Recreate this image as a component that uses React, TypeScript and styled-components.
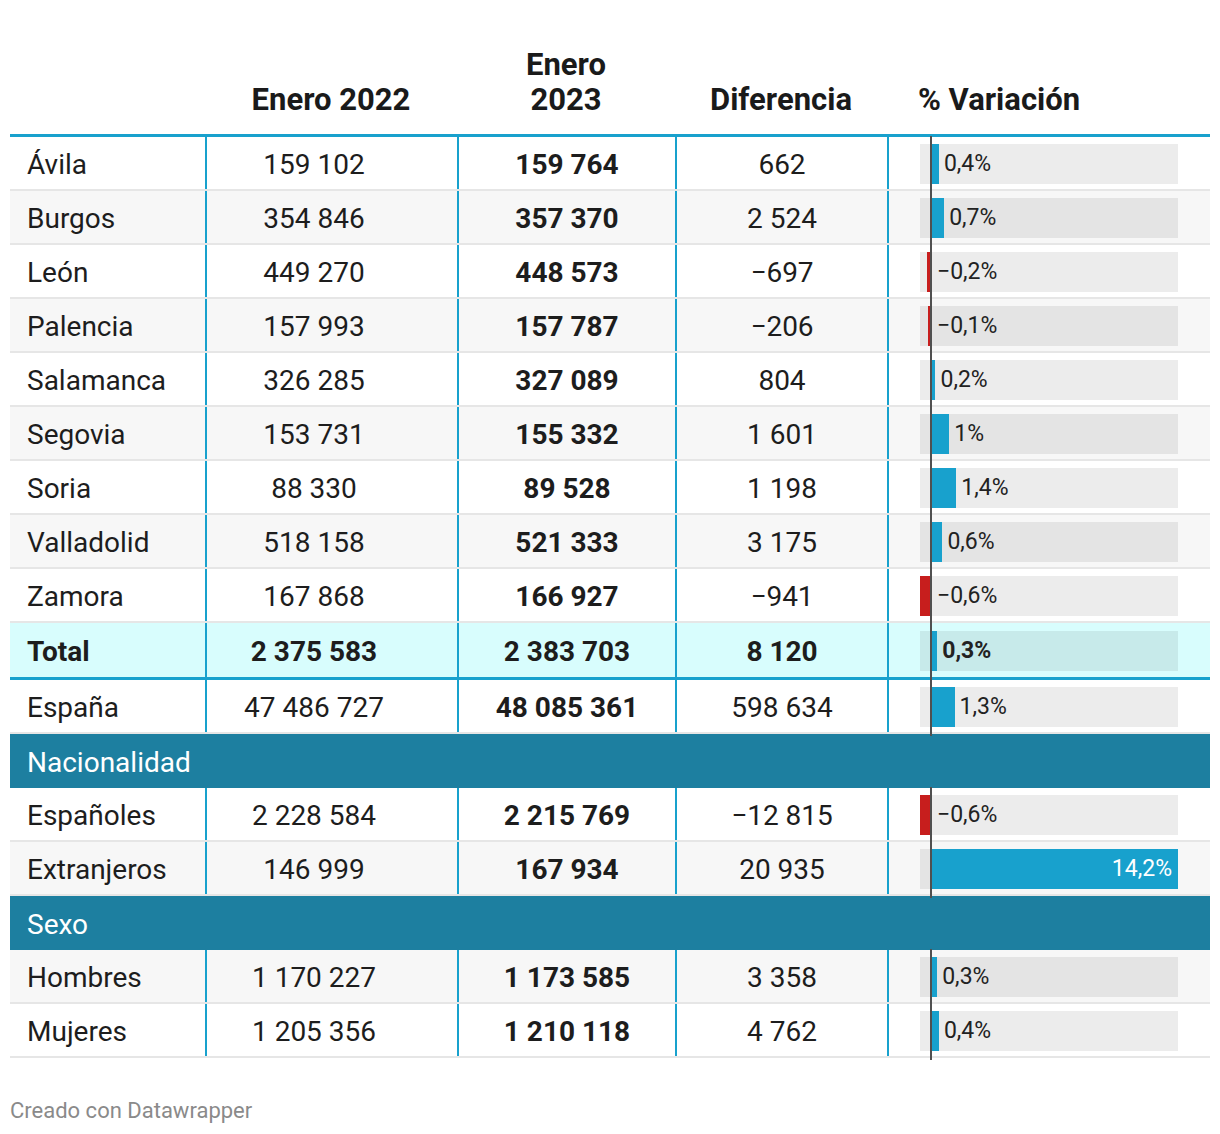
import React from "react";
import styled, { createGlobalStyle } from "styled-components";

const GlobalStyle = createGlobalStyle`
  html, body { margin: 0; padding: 0; background: #ffffff; }
  body { font-family: Roboto, "Noto Sans", "Liberation Sans", sans-serif; color: #1d1d1d; }
`;

const COLS = "195px 252px 218px 212px 323px";
const BLUE = "#18a1cd";
const RED = "#c71e1d";
const TRACK = 258;
const ZERO_NEG = 10;
const ZERO_POS = 12;
const PX = (TRACK - ZERO_POS) / 14.2;

const Page = styled.div`
  width: 1200px;
  padding: 0 10px;
`;

const HeadRow = styled.div`
  display: grid;
  grid-template-columns: ${COLS};
  align-items: end;
  padding: 47px 0 17px;
  border-bottom: 3px solid ${BLUE};
`;

const HeadCell = styled.div<{ $left?: boolean }>`
  font-size: 31px;
  font-weight: 700;
  line-height: 35px;
  color: #1a1a1a;
  white-space: nowrap;
  text-align: ${(p) => (p.$left ? "left" : "center")};
  padding-left: ${(p) => (p.$left ? "31px" : "0")};
`;

const Row = styled.div<{ $bg: string; $total?: boolean }>`
  display: grid;
  grid-template-columns: ${COLS};
  height: ${(p) => (p.$total ? "54px" : "52px")};
  background: ${(p) => p.$bg};
  border-bottom: ${(p) => (p.$total ? `3px solid ${BLUE}` : "2px solid #e6e6e6")};
  font-size: 28px;
  font-weight: ${(p) => (p.$total ? 700 : 400)};
`;

const Cell = styled.div<{ $left?: boolean; $divider?: boolean; $bold?: boolean; $shift?: number }>`
  display: flex;
  align-items: center;
  justify-content: ${(p) => (p.$left ? "flex-start" : "center")};
  padding: ${(p) => (p.$left ? "2px 0 0 17px" : `2px ${p.$shift ?? 0}px 0 0`)};
  border-left: ${(p) => (p.$divider ? `2px solid ${BLUE}` : "none")};
  font-weight: ${(p) => (p.$bold ? 700 : "inherit")};
  white-space: nowrap;
`;

const BarCell = styled.div`
  display: flex;
  align-items: center;
  padding-left: 31px;
  border-left: 2px solid ${BLUE};
`;

const Track = styled.div`
  position: relative;
  width: ${TRACK}px;
  height: 40px;
  margin-top: 1px;
  background: rgba(0, 0, 0, 0.075);
`;

const Bar = styled.div<{ $neg?: boolean }>`
  position: absolute;
  top: 0;
  bottom: 0;
  background: ${(p) => (p.$neg ? RED : BLUE)};
`;

const Axis = styled.div`
  position: absolute;
  top: -8px;
  bottom: -9px;
  left: ${ZERO_NEG}px;
  width: 2px;
  background: #505050;
`;

const BarLabel = styled.span<{ $inside?: boolean }>`
  position: absolute;
  top: 0;
  bottom: 0;
  display: flex;
  align-items: center;
  font-size: 23px;
  color: ${(p) => (p.$inside ? "#ffffff" : "#222222")};
`;

const Band = styled.div`
  height: 54px;
  display: flex;
  align-items: center;
  padding: 2px 0 0 17px;
  box-sizing: border-box;
  background: #1d7fa0;
  color: #ffffff;
  font-size: 28px;
`;

const Footer = styled.div`
  margin-top: 40px;
  font-size: 22px;
  color: #8a8a8a;
`;

type Data = {
  name: string;
  a: string;
  b: string;
  d: string;
  v: number;
  label: string;
};

const provinces: Data[] = [
  { name: "Ávila", a: "159 102", b: "159 764", d: "662", v: 0.4, label: "0,4%" },
  { name: "Burgos", a: "354 846", b: "357 370", d: "2 524", v: 0.7, label: "0,7%" },
  { name: "León", a: "449 270", b: "448 573", d: "−697", v: -0.2, label: "−0,2%" },
  { name: "Palencia", a: "157 993", b: "157 787", d: "−206", v: -0.1, label: "−0,1%" },
  { name: "Salamanca", a: "326 285", b: "327 089", d: "804", v: 0.2, label: "0,2%" },
  { name: "Segovia", a: "153 731", b: "155 332", d: "1 601", v: 1.0, label: "1%" },
  { name: "Soria", a: "88 330", b: "89 528", d: "1 198", v: 1.4, label: "1,4%" },
  { name: "Valladolid", a: "518 158", b: "521 333", d: "3 175", v: 0.6, label: "0,6%" },
  { name: "Zamora", a: "167 868", b: "166 927", d: "−941", v: -0.6, label: "−0,6%" },
];

const total: Data = { name: "Total", a: "2 375 583", b: "2 383 703", d: "8 120", v: 0.3, label: "0,3%" };
const spain: Data = { name: "España", a: "47 486 727", b: "48 085 361", d: "598 634", v: 1.3, label: "1,3%" };
const nationality: Data[] = [
  { name: "Españoles", a: "2 228 584", b: "2 215 769", d: "−12 815", v: -0.6, label: "−0,6%" },
  { name: "Extranjeros", a: "146 999", b: "167 934", d: "20 935", v: 14.2, label: "14,2%" },
];
const sex: Data[] = [
  { name: "Hombres", a: "1 170 227", b: "1 173 585", d: "3 358", v: 0.3, label: "0,3%" },
  { name: "Mujeres", a: "1 205 356", b: "1 210 118", d: "4 762", v: 0.4, label: "0,4%" },
];

function VarBar({ v, label }: { v: number; label: string }) {
  const w = Math.abs(v) * PX;
  const neg = v < 0;
  const left = neg ? ZERO_NEG - w : ZERO_POS;
  const inside = w > 150;
  return (
    <BarCell>
      <Track>
        <Bar $neg={neg} style={{ left, width: w }} />
        <Axis />
        {inside ? (
          <BarLabel $inside style={{ right: 6 }}>
            {label}
          </BarLabel>
        ) : (
          <BarLabel style={{ left: (neg ? ZERO_POS : ZERO_POS + w) + 5 }}>{label}</BarLabel>
        )}
      </Track>
    </BarCell>
  );
}

function DataRow({ d, index, totalRow }: { d: Data; index: number; totalRow?: boolean }) {
  const bg = totalRow ? "#d8fdfd" : index % 2 === 1 ? "#f7f7f7" : "#ffffff";
  return (
    <Row $bg={bg} $total={totalRow}>
      <Cell $left>{d.name}</Cell>
      <Cell $divider $shift={36}>
        {d.a}
      </Cell>
      <Cell $divider $bold>
        {d.b}
      </Cell>
      <Cell $divider>{d.d}</Cell>
      <VarBar v={d.v} label={d.label} />
    </Row>
  );
}

export default function App() {
  return (
    <Page>
      <GlobalStyle />
      <HeadRow>
        <HeadCell />
        <HeadCell>Enero 2022</HeadCell>
        <HeadCell>
          Enero
          <br />
          2023
        </HeadCell>
        <HeadCell>Diferencia</HeadCell>
        <HeadCell $left>% Variación</HeadCell>
      </HeadRow>
      {provinces.map((p, i) => (
        <DataRow key={p.name} d={p} index={i} />
      ))}
      <DataRow d={total} index={9} totalRow />
      <DataRow d={spain} index={10} />
      <Band>Nacionalidad</Band>
      {nationality.map((p, i) => (
        <DataRow key={p.name} d={p} index={12 + i} />
      ))}
      <Band>Sexo</Band>
      {sex.map((p, i) => (
        <DataRow key={p.name} d={p} index={15 + i} />
      ))}
      <Footer>Creado con Datawrapper</Footer>
    </Page>
  );
}
